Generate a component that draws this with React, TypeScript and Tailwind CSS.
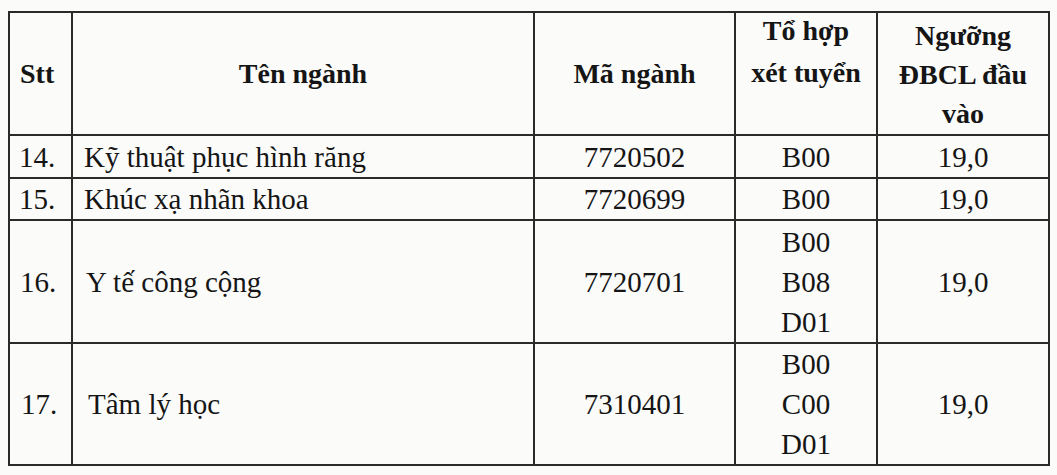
import React from "react";

const rows = [
  { stt: "14.", name: "Kỹ thuật phục hình răng", code: "7720502", combos: ["B00"], score: "19,0", h: "h-[43px]", pl: "pl-[11px]", sp: "pl-[9px]" },
  { stt: "15.", name: "Khúc xạ nhãn khoa", code: "7720699", combos: ["B00"], score: "19,0", h: "h-[42px]", pl: "pl-[11px]", sp: "pl-[9px]" },
  { stt: "16.", name: "Y tế công cộng", code: "7720701", combos: ["B00", "B08", "D01"], score: "19,0", h: "h-[123px]", pl: "pl-[13px]", sp: "pl-[10px]" },
  { stt: "17.", name: "Tâm lý học", code: "7310401", combos: ["B00", "C00", "D01"], score: "19,0", h: "h-[121px]", pl: "pl-[15px]", sp: "pl-[11px]" },
];

const cell = "border-2 border-[#2a2a2a] p-0";

export default function App() {
  return (
    <div className="w-[1057px] h-[475px] overflow-hidden bg-[#fbfbfa] pt-[11px] pl-[8px] text-[#151515] font-['Liberation_Serif','Times_New_Roman',serif] text-[29px] leading-[40px]">
      <table className="border-collapse table-fixed w-[1040px]">
        <colgroup>
          <col className="w-[63px]" />
          <col className="w-[462px]" />
          <col className="w-[201px]" />
          <col className="w-[142px]" />
          <col className="w-[172px]" />
        </colgroup>
        <thead>
          <tr className="h-[123px] text-[28px]">
            <th className={`${cell} align-middle text-left pl-[10px] font-bold`}>Stt</th>
            <th className={`${cell} align-middle text-center font-bold`}>Tên ngành</th>
            <th className={`${cell} align-middle text-center font-bold`}>Mã ngành</th>
            <th className={`${cell} align-top text-center font-bold`}>
              <div className="-mt-[3px] leading-[42px]">
                <div>Tổ hợp</div>
                <div>xét tuyển</div>
              </div>
            </th>
            <th className={`${cell} align-top text-center font-bold pt-[3px] leading-[39px]`}>
              <div>Ngưỡng</div>
              <div>ĐBCL đầu</div>
              <div>vào</div>
            </th>
          </tr>
        </thead>
        <tbody>
          {rows.map((r) => (
            <tr key={r.stt} className={r.h}>
              <td className={`${cell} align-middle text-left ${r.sp}`}>{r.stt}</td>
              <td className={`${cell} align-middle text-left ${r.pl}`}>{r.name}</td>
              <td className={`${cell} align-middle text-center`}>{r.code}</td>
              <td className={`${cell} align-middle text-center`}>
                {r.combos.map((c) => (
                  <div key={c}>{c}</div>
                ))}
              </td>
              <td className={`${cell} align-middle text-center`}>{r.score}</td>
            </tr>
          ))}
        </tbody>
      </table>
    </div>
  );
}
